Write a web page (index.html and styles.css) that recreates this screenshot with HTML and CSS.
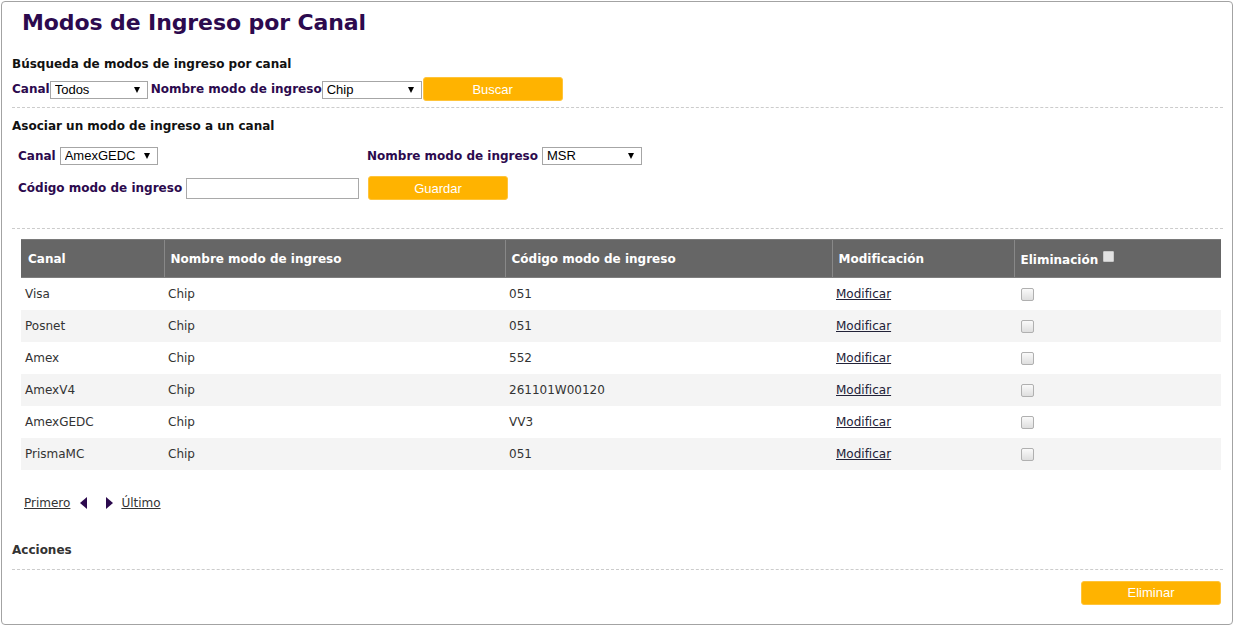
FILE: index.html
```html
<!DOCTYPE html>
<html lang="es">
<head>
<meta charset="utf-8">
<title>Modos de Ingreso por Canal</title>
<link rel="stylesheet" href="styles.css">
</head>
<body>
<div class="page">
  <h1 class="title">Modos de Ingreso por Canal</h1>

  <h2 class="section-title">Búsqueda de modos de ingreso por canal</h2>
  <div class="search-row">
    <label class="lbl lbl-tight">Canal</label>
    <span class="sel sel-a"><select><option>Todos</option></select></span>
    <label class="lbl lbl-tight">Nombre modo de ingreso</label>
    <span class="sel sel-b"><select><option>Chip</option></select></span>
    <button class="btn btn-search">Buscar</button>
  </div>
  <div class="sep"></div>

  <h2 class="section-title section-title-2">Asociar un modo de ingreso a un canal</h2>
  <div class="assoc-grid">
    <div class="cell cell-r1">
      <label class="lbl">Canal</label>
      <span class="sel sel-c"><select><option>AmexGEDC</option></select></span>
    </div>
    <div class="cell cell-r1">
      <label class="lbl">Nombre modo de ingreso</label>
      <span class="sel sel-d"><select><option>MSR</option></select></span>
    </div>
    <div class="cell cell-r2">
      <label class="lbl">Código modo de ingreso</label>
      <input class="txt" type="text">
    </div>
    <div class="cell cell-r2">
      <button class="btn btn-save">Guardar</button>
    </div>
  </div>
  <div class="sep sep-2"></div>

  <table class="grid">
    <colgroup>
      <col style="width:143px">
      <col style="width:341px">
      <col style="width:327px">
      <col style="width:182px">
      <col style="width:207px">
    </colgroup>
    <thead>
      <tr>
        <th>Canal</th>
        <th>Nombre modo de ingreso</th>
        <th>Código modo de ingreso</th>
        <th>Modificación</th>
        <th>Eliminación <input type="checkbox" class="chk-head"></th>
      </tr>
    </thead>
    <tbody>
      <tr><td>Visa</td><td>Chip</td><td>051</td><td><a href="#">Modificar</a></td><td><input type="checkbox" class="chk"></td></tr>
      <tr><td>Posnet</td><td>Chip</td><td>051</td><td><a href="#">Modificar</a></td><td><input type="checkbox" class="chk"></td></tr>
      <tr><td>Amex</td><td>Chip</td><td>552</td><td><a href="#">Modificar</a></td><td><input type="checkbox" class="chk"></td></tr>
      <tr><td>AmexV4</td><td>Chip</td><td>261101W00120</td><td><a href="#">Modificar</a></td><td><input type="checkbox" class="chk"></td></tr>
      <tr><td>AmexGEDC</td><td>Chip</td><td>VV3</td><td><a href="#">Modificar</a></td><td><input type="checkbox" class="chk"></td></tr>
      <tr><td>PrismaMC</td><td>Chip</td><td>051</td><td><a href="#">Modificar</a></td><td><input type="checkbox" class="chk"></td></tr>
    </tbody>
  </table>

  <div class="pager">
    <a href="#">Primero</a>
    <span class="tri tri-left"></span>
    <span class="tri tri-right"></span>
    <a href="#">Último</a>
  </div>

  <h3 class="actions-title">Acciones</h3>
  <div class="sep sep-3"></div>
  <div class="actions">
    <button class="btn btn-delete">Eliminar</button>
  </div>
</div>
</body>
</html>
```
FILE: styles.css
```css
* { box-sizing: border-box; }

html, body {
  margin: 0;
  padding: 0;
  background: #fff;
}

body {
  font-family: "DejaVu Sans", Verdana, sans-serif;
  font-size: 12px;
  color: #333;
}

.page {
  margin: 1px 0 0 1px;
  width: 1232px;
  height: 624px;
  border: 1px solid #a3a3a3;
  border-radius: 4px;
  padding: 0 9px 0 10px;
  overflow: hidden;
}

.title {
  margin: 8px 0 0 10px;
  font-size: 22px;
  line-height: 26px;
  font-weight: bold;
  color: #2c0a4e;
  letter-spacing: -0.1px;
}

.section-title {
  margin: 20px 0 0 0;
  font-size: 12px;
  line-height: 16px;
  font-weight: bold;
  color: #111;
}

.section-title-2 { margin-top: 10px; }

.lbl {
  font-weight: bold;
  font-size: 12px;
  color: #2c0a4e;
  margin-right: 4px;
  white-space: nowrap;
}

.lbl-tight { margin-right: 0; }

.search-row {
  margin-top: 5px;
  height: 24px;
  display: flex;
  align-items: center;
}

.search-row .sel { margin-top: 2px; }

.sel {
  position: relative;
  display: inline-flex;
}

.sel::after {
  content: "";
  position: absolute;
  right: 8px;
  top: 6px;
  width: 0;
  height: 0;
  border-left: 3px solid transparent;
  border-right: 3px solid transparent;
  border-top: 6px solid #000;
  pointer-events: none;
}

.sel select {
  -webkit-appearance: none;
  appearance: none;
  height: 18px;
  border: 1px solid #a6a6a6;
  border-radius: 0;
  background: #fff;
  color: #000;
  font-family: "Liberation Sans", Arial, sans-serif;
  font-size: 13px;
  line-height: 16px;
  padding: 0 0 0 4px;
  margin: 0;
  outline: none;
}

.sel-a { margin-right: 3px; }
.sel-a select { width: 98px; }
.sel-b { margin-right: 1px; }
.sel-b select { width: 100px; }
.sel-c select { width: 98px; }
.sel-d select { width: 100px; }

.btn {
  border: 1px solid #ffc43a;
  border-radius: 3px;
  background: #ffb300;
  color: #fff;
  font-family: "Liberation Sans", Arial, sans-serif;
  font-size: 13px;
  height: 24px;
  padding: 0;
  margin: 0;
  cursor: pointer;
}

.btn-search { width: 140px; }
.btn-save { width: 140px; margin-left: 1px; }
.btn-delete { width: 140px; }

.sep {
  margin-top: 6px;
  border-top: 1px dashed #cccccc;
  height: 0;
}

.sep-2 { margin-top: 28px; }
.sep-3 { margin-top: 11px; }

.assoc-grid {
  margin-top: 13px;
  padding-left: 6px;
  display: grid;
  grid-template-columns: 349px auto;
  row-gap: 11px;
}

.cell {
  display: flex;
  align-items: center;
}

.cell-r1 { height: 18px; }
.cell-r2 { height: 24px; }

.txt {
  width: 173px;
  height: 21px;
  border: 1px solid #a9a9a9;
  border-radius: 0;
  padding: 0 3px;
  margin: 0;
  font-family: "Liberation Sans", Arial, sans-serif;
  font-size: 13px;
  outline: none;
}

.grid {
  margin: 10px 0 0 9px;
  width: 1200px;
  table-layout: fixed;
  border-collapse: collapse;
}

.grid th {
  background: #666666;
  color: #fff;
  font-weight: bold;
  font-size: 12px;
  text-align: left;
  height: 38px;
  padding: 0 0 0 6px;
  border-left: 1px solid #888;
  border-top: 1px solid #7a7a7a;
  border-bottom: 1px solid #7e7e7e;
  white-space: nowrap;
}

.grid th:first-child { border-left: none; padding-left: 7px; }

.grid td {
  height: 32px;
  padding: 0 0 0 4px;
  font-size: 12px;
  color: #333;
  white-space: nowrap;
}

.grid tbody tr:nth-child(even) td { background: #f4f4f4; }

.grid a {
  color: #222238;
  text-decoration: underline;
}

.chk {
  -webkit-appearance: none;
  appearance: none;
  width: 13px;
  height: 13px;
  margin: 0 0 0 3px;
  border: 1px solid #b0b0b0;
  border-radius: 2px;
  background: linear-gradient(#fafafa, #dedede);
  vertical-align: middle;
}

.chk-head {
  -webkit-appearance: none;
  appearance: none;
  width: 11px;
  height: 11px;
  margin: 0 0 0 1px;
  border: 1px solid #c8c8c8;
  border-radius: 1px;
  background: #e2e2e2;
  vertical-align: 2px;
}

.pager {
  margin-top: 25px;
  padding-left: 12px;
  height: 16px;
  display: flex;
  align-items: center;
  line-height: 16px;
}

.pager a {
  color: #333;
  text-decoration: underline;
}

.tri {
  display: inline-block;
  width: 0;
  height: 0;
  border-top: 6px solid transparent;
  border-bottom: 6px solid transparent;
}

.tri-left {
  border-right: 7px solid #2c0a4e;
  margin-left: 10px;
}

.tri-right {
  border-left: 7px solid #2c0a4e;
  margin-left: 19px;
  margin-right: 8px;
}

.actions-title {
  margin: 31px 0 0 0;
  font-size: 12px;
  line-height: 16px;
  font-weight: bold;
  color: #333;
}

.actions {
  margin-top: 11px;
  display: flex;
  justify-content: flex-end;
  padding-right: 2px;
}
```
